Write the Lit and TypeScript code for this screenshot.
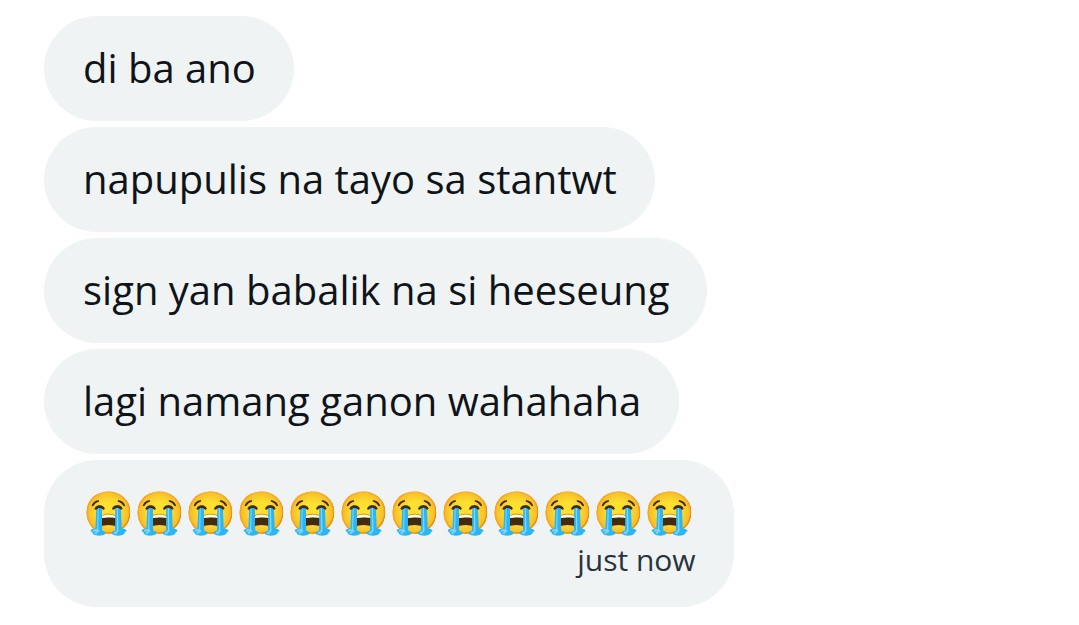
import { LitElement, html, css } from "lit";
import { customElement } from "lit/decorators.js";

const MESSAGES = [
  "di ba ano",
  "napupulis na tayo sa stantwt",
  "sign yan babalik na si heeseung",
  "lagi namang ganon wahahaha",
];

@customElement("app-root")
export class AppRoot extends LitElement {
  static styles = css`
    :host {
      display: block;
      min-height: 100vh;
      box-sizing: border-box;
      padding: 16px 44px;
      background: #ffffff;
      color: #0f1419;
      font-family: "Open Sans", "Noto Color Emoji", sans-serif;
    }
    .thread {
      display: flex;
      flex-direction: column;
      align-items: flex-start;
      gap: 6px;
      margin: 0;
      padding: 0;
      list-style: none;
    }
    .bubble {
      padding: 24px 38px 25px 39px;
      border-radius: 53px;
      background: #eff3f4;
      font-size: 40px;
      line-height: 56px;
    }
    .text {
      margin: 0;
    }
    .emoji {
      font-size: 41px;
      line-height: 54px;
    }
    .time {
      display: block;
      font-size: 30px;
      line-height: 44px;
      text-align: right;
      color: #29333d;
    }
  `;

  render() {
    return html`
      <ul class="thread">
        ${MESSAGES.map((m) => html`<li class="bubble"><p class="text">${m}</p></li>`)}
        <li class="bubble">
          <p class="text emoji">${"😭".repeat(12)}</p>
          <time class="time">just now</time>
        </li>
      </ul>
    `;
  }
}
